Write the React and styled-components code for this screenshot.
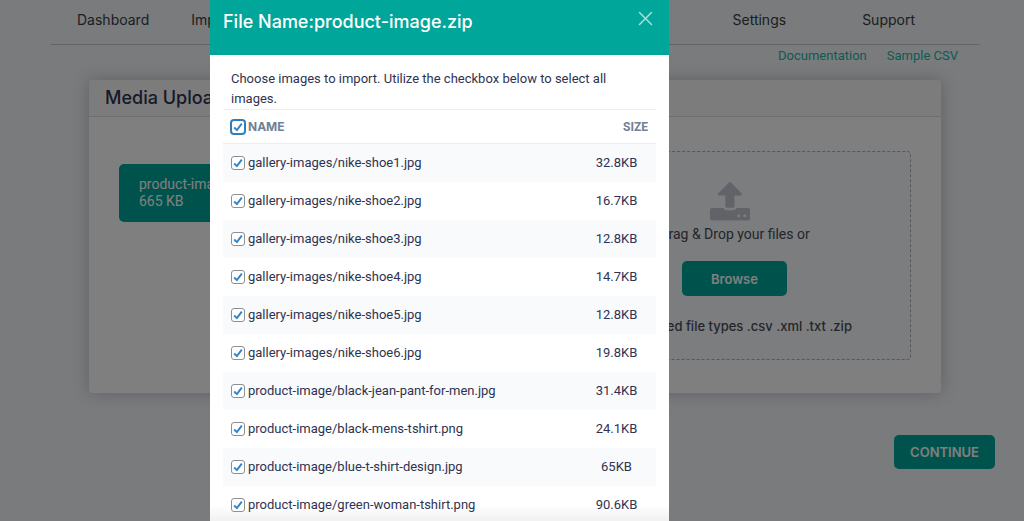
import React, { useState } from 'react';
import styled, { createGlobalStyle } from 'styled-components';

const teal = '#00a699';
const heading = 'Inter, "Open Sans", sans-serif';
const body = 'Roboto, "Liberation Sans", sans-serif';

const Global = createGlobalStyle`
  *, *::before, *::after { box-sizing: border-box; }
  html, body, #root { height: 100%; }
  body {
    margin: 0;
    overflow: hidden;
    background: #f3f6fa;
    color: #2f3350;
    font-family: ${body};
    font-size: 13px;
  }
  p, h1, h2 { margin: 0; }
`;

const Page = styled.div`
  padding: 0 44px 0 51px;
`;

const Nav = styled.nav`
  display: flex;
  justify-content: space-between;
  height: 45px;
  padding: 0 65px 5px 26px;
  border-bottom: 1px solid #c4c8cc;
`;

const NavGroup = styled.div`
  display: flex;
  align-items: center;
  gap: ${(p) => p.$gap}px;
`;

const NavLink = styled.a`
  color: #3a3c44;
  font-family: ${heading};
  font-size: 14px;
  text-decoration: none;
`;

const HelpLinks = styled.div`
  display: flex;
  justify-content: flex-end;
  gap: 20px;
  height: 35px;
  padding: 1px 22px 0 0;
`;

const HelpLink = styled.a`
  color: #1ab8a8;
  font-size: 13px;
  line-height: 20px;
  text-decoration: none;
`;

const Card = styled.section`
  margin: 0 39px 0 38px;
  border-radius: 4px;
  background: #fff;
  box-shadow: 0 0 16px rgba(60, 70, 80, 0.3);
`;

const CardHeader = styled.header`
  height: 37px;
  padding: 0 16px;
  border-bottom: 1px solid #dadde2;
  border-radius: 4px 4px 0 0;
  background: #f8f9fb;
`;

const CardTitle = styled.h1`
  font-family: ${heading};
  font-size: 18px;
  font-weight: 500;
  line-height: 36px;
`;

const CardBody = styled.div`
  display: flex;
  align-items: flex-start;
  justify-content: space-between;
  padding: 34px 30px 33px;
`;

const FileChip = styled.div`
  width: 353px;
  margin-top: 13px;
  padding: 12px 20px;
  border-radius: 5px;
  background: ${teal};
  color: #fff;
  font-size: 14px;
  line-height: 17px;
`;

const DropZone = styled.div`
  display: flex;
  flex-direction: column;
  align-items: center;
  width: 353px;
  height: 209px;
  padding-top: 29px;
  border: 1px dashed #adb0ba;
  border-radius: 4px;
  background: #f7fafd;
  color: #4a4d58;
`;

const UploadIcon = styled.svg`
  width: 40px;
  height: 40px;
  margin-right: 10px;
`;

const DropText = styled.p`
  font-size: 14px;
  line-height: 26px;
`;

const Button = styled.button`
  height: ${(p) => p.$height}px;
  padding: 0 ${(p) => p.$pad}px;
  border: 0;
  border-radius: 5px;
  background: ${teal};
  color: #fff;
  font-family: ${heading};
  font-size: 13px;
  font-weight: 600;
`;

const Browse = styled(Button)`
  margin: 14px 0 20px;
`;

const FileTypes = styled.p`
  font-family: ${heading};
  font-size: 13px;
  font-weight: 500;
  line-height: 20px;
`;

const Actions = styled.div`
  display: flex;
  justify-content: flex-end;
  margin: 42px -15px 0 0;
`;

const Overlay = styled.div`
  position: fixed;
  inset: 0;
  display: grid;
  grid-template-columns: 210fr 459fr 355fr;
  background: rgba(0, 0, 0, 0.5);
`;

const Dialog = styled.section`
  grid-column: 2;
  min-width: 0;
  background: linear-gradient(to top, #f1f1f1, #fff 16px);
  overflow: hidden;
`;

const DialogHeader = styled.header`
  display: flex;
  align-items: flex-start;
  justify-content: space-between;
  height: 55px;
  padding: 11px 16px 0 13px;
  background: ${teal};
`;

const DialogTitle = styled.h2`
  color: #fff;
  font-family: ${heading};
  font-size: 18px;
  font-weight: 500;
  line-height: 22px;
`;

const Close = styled.button`
  display: flex;
  padding: 0;
  border: 0;
  background: none;
  color: #a4e2dc;
`;

const DialogBody = styled.div`
  padding: 14px 13px 0;
`;

const Intro = styled.p`
  padding: 0 32px 0 8px;
  line-height: 20px;
`;

const Table = styled.table`
  width: 100%;
  border-collapse: collapse;
  table-layout: fixed;
`;

const HeadCell = styled.th`
  width: ${(p) => p.$width || 'auto'};
  height: 34px;
  padding: 0 8px 0 7px;
  border-top: 1px solid #edf0f4;
  border-bottom: 1px solid #e9edf2;
  color: #718096;
  font-family: ${(p) => p.$font};
  font-size: 12px;
  font-weight: 700;
  text-align: ${(p) => p.$align || 'left'};
`;

const Row = styled.tr`
  &:nth-child(odd) { background: #f8fafc; }
`;

const Cell = styled.td`
  height: 38px;
  padding: 0 ${(p) => (p.$center ? 0 : 7)}px;
  text-align: ${(p) => (p.$center ? 'center' : 'left')};
`;

const Label = styled.label`
  display: flex;
  align-items: center;
  gap: 3px;
`;

const Check = styled.input.attrs({ type: 'checkbox' })`
  appearance: none;
  flex: none;
  width: 14px;
  height: 14px;
  margin: 0 0 0 1px;
  border: 1px solid #8c8f94;
  border-radius: 3px;
  background: #fff;
  &:checked {
    background: #fff url("data:image/svg+xml,%3Csvg xmlns='http://www.w3.org/2000/svg' viewBox='0 0 12 12'%3E%3Cpath d='M2.200 6.500 4.900 9.100 9.800 2.600' fill='none' stroke='%233582c4' stroke-width='1.9'/%3E%3C/svg%3E") center / 12px 12px no-repeat;
  }
  &.all {
    border-color: #2f7cb8;
    box-shadow: 0 0 0 1px #2f7cb8;
  }
`;

const files = [
  ['gallery-images/nike-shoe1.jpg', '32.8KB'],
  ['gallery-images/nike-shoe2.jpg', '16.7KB'],
  ['gallery-images/nike-shoe3.jpg', '12.8KB'],
  ['gallery-images/nike-shoe4.jpg', '14.7KB'],
  ['gallery-images/nike-shoe5.jpg', '12.8KB'],
  ['gallery-images/nike-shoe6.jpg', '19.8KB'],
  ['product-image/black-jean-pant-for-men.jpg', '31.4KB'],
  ['product-image/black-mens-tshirt.png', '24.1KB'],
  ['product-image/blue-t-shirt-design.jpg', '65KB'],
  ['product-image/green-woman-tshirt.png', '90.6KB'],
];

export default function App() {
  const [picked, setPicked] = useState(files.map(() => true));
  const all = picked.every(Boolean);
  return (
    <>
      <Global />
      <Page>
        <Nav>
          <NavGroup $gap={42}>
            <NavLink href="#dashboard">Dashboard</NavLink>
            <NavLink href="#import">Import</NavLink>
          </NavGroup>
          <NavGroup $gap={76}>
            <NavLink href="#settings">Settings</NavLink>
            <NavLink href="#support">Support</NavLink>
          </NavGroup>
        </Nav>
        <HelpLinks>
          <HelpLink href="#docs">Documentation</HelpLink>
          <HelpLink href="#sample">Sample CSV</HelpLink>
        </HelpLinks>
        <Card>
          <CardHeader><CardTitle>Media Upload</CardTitle></CardHeader>
          <CardBody>
            <FileChip>
              <div>product-image.zip</div>
              <div>665 KB</div>
            </FileChip>
            <DropZone>
              <UploadIcon viewBox="0 0 40 40" fill="#c3c7d2" aria-hidden="true">
                <path d="M19 1.4a1.3 1.3 0 0 1 1.9 0l10.6 10.8c.8.8.3 2.2-.9 2.2h-6.1v10.9a1.5 1.5 0 0 1-1.5 1.500h-6.2a1.5 1.5 0 0 1-1.5-1.500V14.400H9.200c-1.200 0-1.700-1.400-.9-2.200z" />
                <path fillRule="evenodd" d="M2 27h11.500c.4 1.300 1.600 2.200 3 2.200h6.700c1.400 0 2.600-.9 3-2.200H38a2 2 0 0 1 2 2v8.500a2 2 0 0 1-2 2H2a2 2 0 0 1-2-2V29a2 2 0 0 1 2-2zm26.700 6.300a1.500 1.500 0 1 0 0 3 1.500 1.500 0 0 0 0-3zm6 0a1.500 1.500 0 1 0 0 3 1.500 1.500 0 0 0 0-3z" />
              </UploadIcon>
              <DropText>Drag &amp; Drop your files or</DropText>
              <Browse type="button" $height={35} $pad={29}>Browse</Browse>
              <FileTypes>Supported file types .csv .xml .txt .zip</FileTypes>
            </DropZone>
          </CardBody>
        </Card>
        <Actions>
          <Button type="button" $height={34} $pad={16}>CONTINUE</Button>
        </Actions>
      </Page>
      <Overlay>
        <Dialog role="dialog" aria-label="Choose images">
          <DialogHeader>
            <DialogTitle>File Name:product-image.zip</DialogTitle>
            <Close type="button" aria-label="Close">
              <svg width="15" height="15" viewBox="0 0 15 15" stroke="currentColor" strokeWidth="1.5" strokeLinecap="round">
                <path d="M1.500 1.500 13.500 13.500M13.500 1.500 1.500 13.500" />
              </svg>
            </Close>
          </DialogHeader>
          <DialogBody>
            <Intro>Choose images to import. Utilize the checkbox below to select all images.</Intro>
            <Table>
              <thead>
                <tr>
                  <HeadCell $font={heading}>
                    <Label>
                      <Check className="all" checked={all} onChange={() => setPicked(files.map(() => !all))} />
                      NAME
                    </Label>
                  </HeadCell>
                  <HeadCell $font={body} $width="79px" $align="right">SIZE</HeadCell>
                </tr>
              </thead>
              <tbody>
                {files.map(([name, size], i) => (
                  <Row key={name}>
                    <Cell>
                      <Label>
                        <Check
                          checked={picked[i]}
                          onChange={() => setPicked(picked.map((v, j) => (j === i ? !v : v)))}
                        />
                        {name}
                      </Label>
                    </Cell>
                    <Cell $center>{size}</Cell>
                  </Row>
                ))}
              </tbody>
            </Table>
          </DialogBody>
        </Dialog>
      </Overlay>
    </>
  );
}
